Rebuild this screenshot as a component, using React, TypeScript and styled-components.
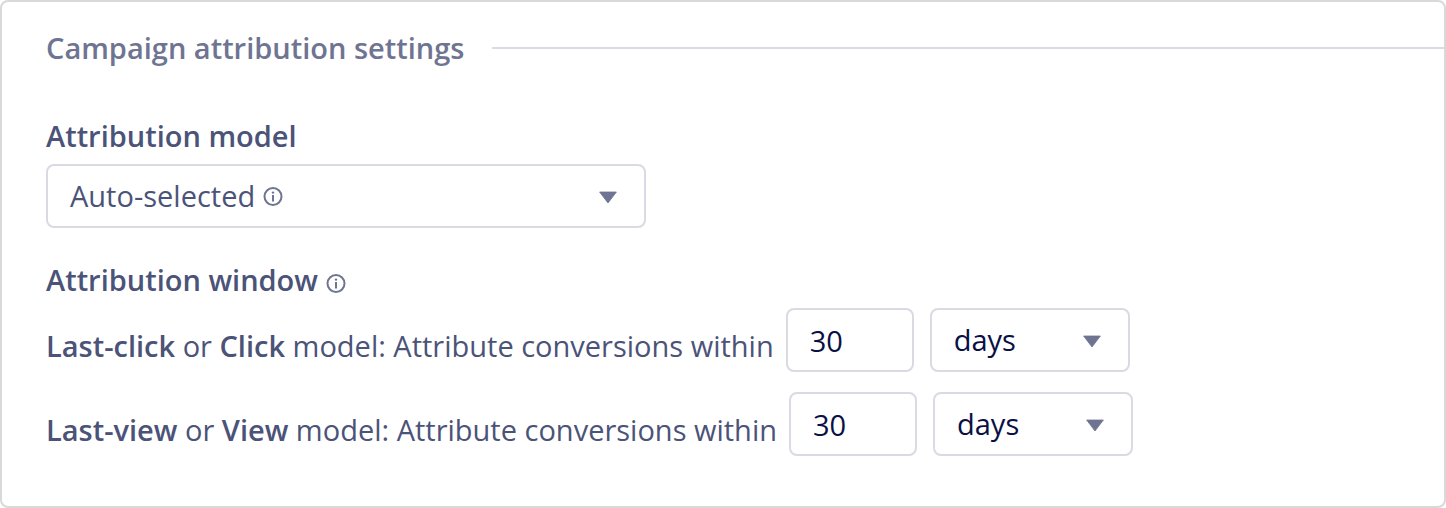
import React from "react";
import styled, { createGlobalStyle } from "styled-components";

const Global = createGlobalStyle`
  *, *::before, *::after { box-sizing: border-box; }
  body { margin: 0; background: #fff; font-family: "Open Sans", sans-serif; }
`;

const Panel = styled.main`
  min-height: 100vh;
  border: 2px solid #d9d9d9;
  border-radius: 8px;
  padding: 26px 0 28px 44px;
  color: #4b5378;
  font-size: 29px;
  line-height: 40px;
`;

const Header = styled.header`
  display: flex;
  align-items: center;
  gap: 28px;
`;

const Title = styled.h2`
  margin: 0;
  font-size: 29px;
  font-weight: 600;
  line-height: 40px;
  color: #6e7492;
`;

const Rule = styled.hr`
  flex: 1;
  margin: 0;
  border: 0;
  border-top: 2px solid #d9dae3;
`;

const Section = styled.section<{ $top: number }>`
  margin-top: ${(p) => p.$top}px;
`;

const Heading = styled.h3`
  display: flex;
  align-items: center;
  gap: 8px;
  margin: 0 0 8px;
  font-size: 29px;
  font-weight: 600;
  line-height: 40px;

  svg { margin-top: 6px; }
`;

const Picker = styled.button`
  display: flex;
  align-items: center;
  gap: 8px;
  width: 600px;
  max-width: 100%;
  height: 64px;
  padding: 0 26px 0 22px;
  border: 2px solid #d9dae3;
  border-radius: 8px;
  background: #fff;
  color: inherit;
  font: inherit;
`;

const Spacer = styled.span`
  flex: 1;
`;

const Row = styled.div`
  display: flex;
  align-items: center;
  gap: 12px;
  margin-bottom: 20px;
`;

const Label = styled.label`
  padding-top: 12px;
  b { font-weight: 600; }
`;

const Fields = styled.div`
  display: flex;
  gap: 16px;
`;

const Amount = styled.input`
  width: 128px;
  height: 64px;
  padding: 0 22px;
  border: 2px solid #d9dae3;
  border-radius: 8px;
  background: #fff;
  color: #0a1045;
  font: inherit;
`;

const UnitBox = styled.div`
  position: relative;
  width: 200px;
`;

const Unit = styled.select`
  display: block;
  appearance: none;
  width: 100%;
  height: 64px;
  padding: 0 22px;
  border: 2px solid #d9dae3;
  border-radius: 8px;
  background: #fff;
  color: #0a1045;
  font: inherit;
`;

const UnitArrow = styled.span`
  position: absolute;
  top: 0;
  right: 28px;
  height: 64px;
  display: flex;
  align-items: center;
  pointer-events: none;
`;

const Caret = () => (
  <svg width="20" height="16" viewBox="0 0 20 16" aria-hidden="true">
    <path d="M1.6 4h16.8L10 15z" fill="#6e7492" stroke="#6e7492" strokeWidth="0.8" strokeLinejoin="round" />
  </svg>
);

const Info = () => (
  <svg width="20" height="20" viewBox="0 0 20 20" fill="none" aria-hidden="true">
    <circle cx="10" cy="10.5" r="8.5" stroke="#6e7492" strokeWidth="2" />
    <path d="M10 9v6.4" stroke="#6e7492" strokeWidth="2" />
    <circle cx="10" cy="6.6" r="1.2" fill="#6e7492" />
  </svg>
);

const models = [
  { id: "click", first: "Last-click", second: "Click" },
  { id: "view", first: "Last-view", second: "View" },
];

export default function App() {
  return (
    <>
      <Global />
      <Panel>
        <Header>
          <Title>Campaign attribution settings</Title>
          <Rule />
        </Header>
        <Section $top={48}>
          <Heading id="model">Attribution model</Heading>
          <Picker type="button" aria-haspopup="listbox" aria-labelledby="model">
            Auto-selected <Info />
            <Spacer />
            <Caret />
          </Picker>
        </Section>
        <Section $top={32}>
          <Heading>
            Attribution window <Info />
          </Heading>
          {models.map((m) => (
            <Row key={m.id}>
              <Label htmlFor={m.id}>
                <b>{m.first}</b> or <b>{m.second}</b> model: Attribute conversions within
              </Label>
              <Fields>
                <Amount id={m.id} type="text" inputMode="numeric" defaultValue="30" />
                <UnitBox>
                  <Unit aria-label={`${m.second} window unit`} defaultValue="days">
                    <option value="days">days</option>
                  </Unit>
                  <UnitArrow>
                    <Caret />
                  </UnitArrow>
                </UnitBox>
              </Fields>
            </Row>
          ))}
        </Section>
      </Panel>
    </>
  );
}
